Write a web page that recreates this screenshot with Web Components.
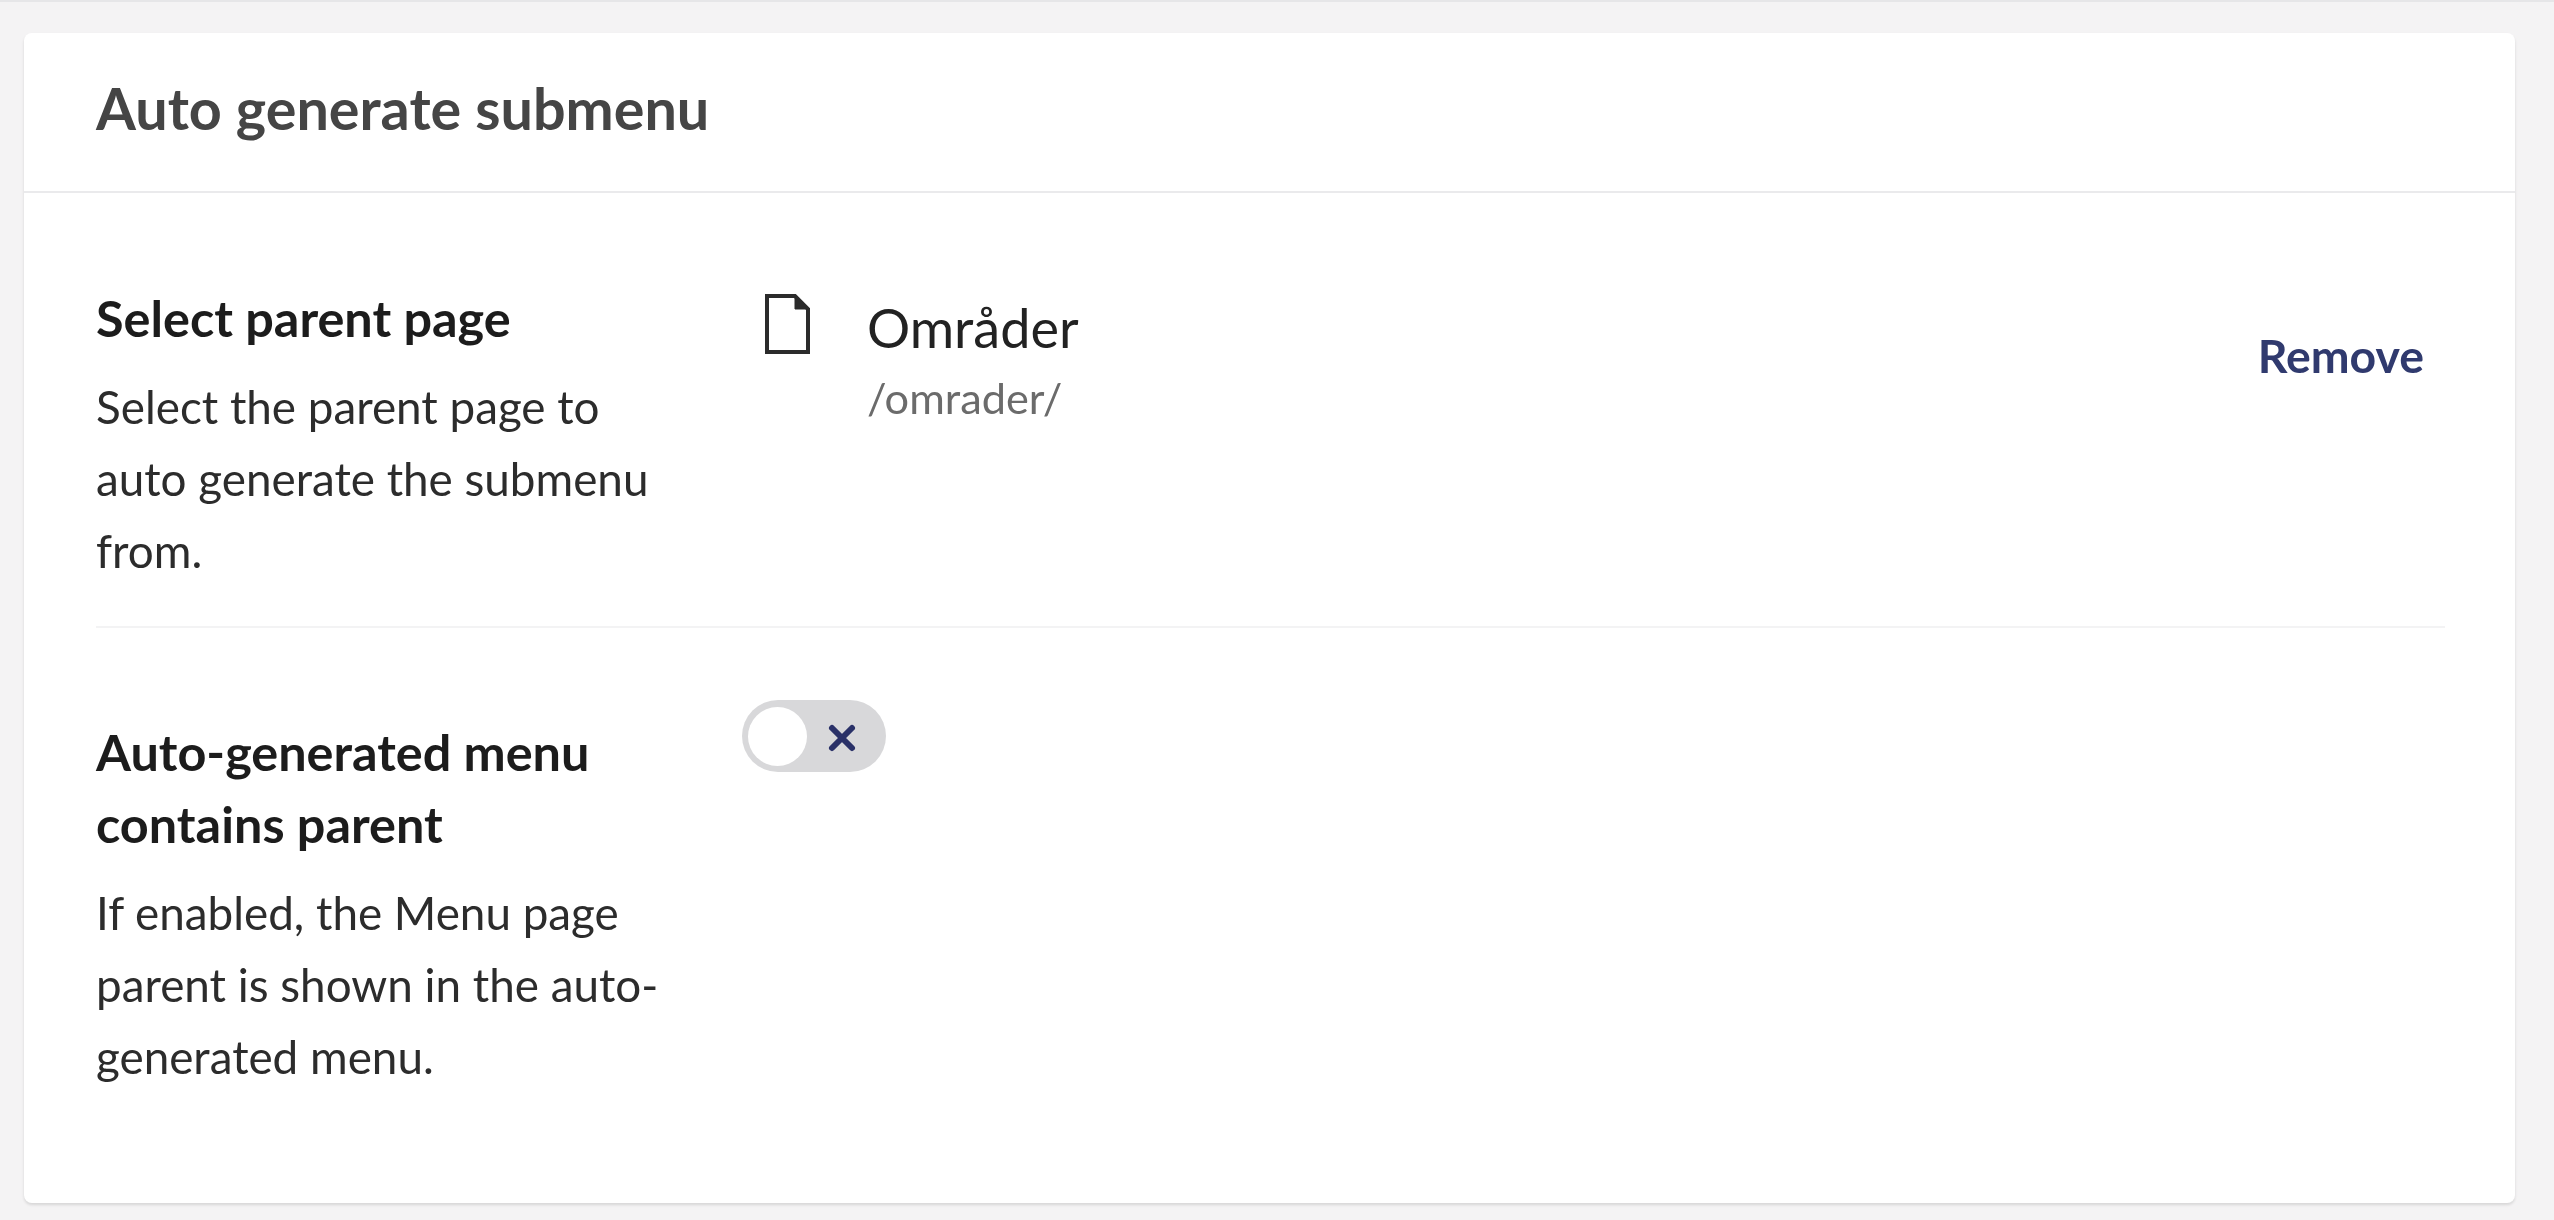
<!DOCTYPE html>
<html>
<head>
<meta charset="utf-8">
<title>Auto generate submenu</title>
<style>
  html, body { margin: 0; height: 100%; }
  body {
    background: #f4f3f4;
    border-top: 2px solid #e6e6e8;
    box-sizing: border-box;
    padding: 31px 39px 0 24px;
    font-family: Lato, "Liberation Sans", sans-serif;
    overflow: hidden;
  }
</style>
</head>
<body>
<settings-card heading="Auto generate submenu">
  <setting-row label="Select parent page">
    <span slot="description">Select the parent page to<br>auto generate the submenu<br>from.</span>
    <page-picker name="Områder" url="/omrader/"></page-picker>
  </setting-row>
  <setting-row label="Auto-generated menu contains parent" class="last">
    <span slot="description">If enabled, the Menu page<br>parent is shown in the auto-<br>generated menu.</span>
    <toggle-switch></toggle-switch>
  </setting-row>
</settings-card>

<script>
class SettingsCard extends HTMLElement {
  constructor() {
    super();
    const shadow = this.attachShadow({mode: 'open'});
    shadow.innerHTML = `
    <style>
      :host {
        display: block;
        height: 1170px;
        background: #fff;
        border-radius: 8px;
        box-shadow: 0 2px 3px rgba(0,0,0,0.12);
        filter: blur(0.7px);
      }
      header {
        height: 160px;
        box-sizing: border-box;
        padding: 42px 72px 0;
        border-bottom: 2px solid #eaeaec;
        font-size: 57.5px;
        line-height: 66px;
        font-weight: 700;
        color: #454545;
      }
      main { padding: 0 70px 0 72px; }
    </style>
    <header></header>
    <main><slot></slot></main>
    `;
    shadow.querySelector('header').textContent = this.getAttribute('heading');
  }
}

class SettingRow extends HTMLElement {
  constructor() {
    super();
    const shadow = this.attachShadow({mode: 'open'});
    shadow.innerHTML = `
    <style>
      :host {
        display: grid;
        grid-template-columns: 646px 1fr;
        box-sizing: border-box;
        height: 435px;
        border-bottom: 2px solid #f3f3f4;
      }
      :host(.last) { border-bottom: none; height: auto; }
      .text { padding-top: 89px; }
      .control { padding-top: 95px; }
      :host(.last) .text { padding-top: 88px; }
      :host(.last) .control { padding-top: 72px; }
      h3 {
        margin: 0 0 17px;
        width: 540px;
        font-size: 50.4px;
        line-height: 72px;
        font-weight: 700;
        color: #1c1c1c;
      }
      p {
        margin: 0;
        font-size: 45.8px;
        line-height: 72px;
        color: #2c2c2c;
      }
    </style>
    <div class="text">
      <h3></h3>
      <p><slot name="description"></slot></p>
    </div>
    <div class="control"><slot></slot></div>
    `;
    shadow.querySelector('h3').textContent = this.getAttribute('label');
  }
}

class PagePicker extends HTMLElement {
  constructor() {
    super();
    const shadow = this.attachShadow({mode: 'open'});
    shadow.innerHTML = `
    <style>
      :host {
        display: flex;
        align-items: flex-start;
        padding-right: 21px;
      }
      svg { width: 50px; height: 66px; margin: 4px 0 0 20px; flex: none; }
      .info { margin-left: 55px; flex: 1; margin-top: 7px; }
      .name { font-size: 54px; line-height: 66px; color: #222; }
      .url { font-size: 43.3px; line-height: 50px; margin-top: 11px; color: #6b6b6b; }
      a { font-size: 46.4px; line-height: 60px; font-weight: 700; color: #303a6e; margin-top: 37px; }
    </style>
    <svg viewBox="0 0 50 66" fill="none" stroke="#2b2b2b" stroke-width="4">
      <path d="M5 4H33L46 17V60H5Z"/>
      <path d="M33 4V17H46Z" fill="#2b2b2b" stroke-width="1"/>
    </svg>
    <div class="info">
      <div class="name"></div>
      <div class="url"></div>
    </div>
    <a>Remove</a>
    `;
    shadow.querySelector('.name').textContent = this.getAttribute('name');
    shadow.querySelector('.url').textContent = this.getAttribute('url');
  }
}

class ToggleSwitch extends HTMLElement {
  constructor() {
    super();
    const shadow = this.attachShadow({mode: 'open'});
    shadow.innerHTML = `
    <style>
      :host {
        display: flex;
        align-items: center;
        width: 144px;
        height: 72px;
        box-sizing: border-box;
        padding: 0 6px;
        border-radius: 36px;
        background: #d8d8da;
      }
      .knob { width: 59px; height: 59px; border-radius: 50%; background: #fff; }
      svg { width: 30px; height: 30px; margin: 4px 0 0 20px; }
    </style>
    <div class="knob"></div>
    <svg viewBox="0 0 30 30" stroke="#2a3168" stroke-width="6" stroke-linecap="round">
      <path d="M5 5L25 25M25 5L5 25"/>
    </svg>
    `;
  }
}

customElements.define('settings-card', SettingsCard);
customElements.define('setting-row', SettingRow);
customElements.define('page-picker', PagePicker);
customElements.define('toggle-switch', ToggleSwitch);
</script>
</body>
</html>
